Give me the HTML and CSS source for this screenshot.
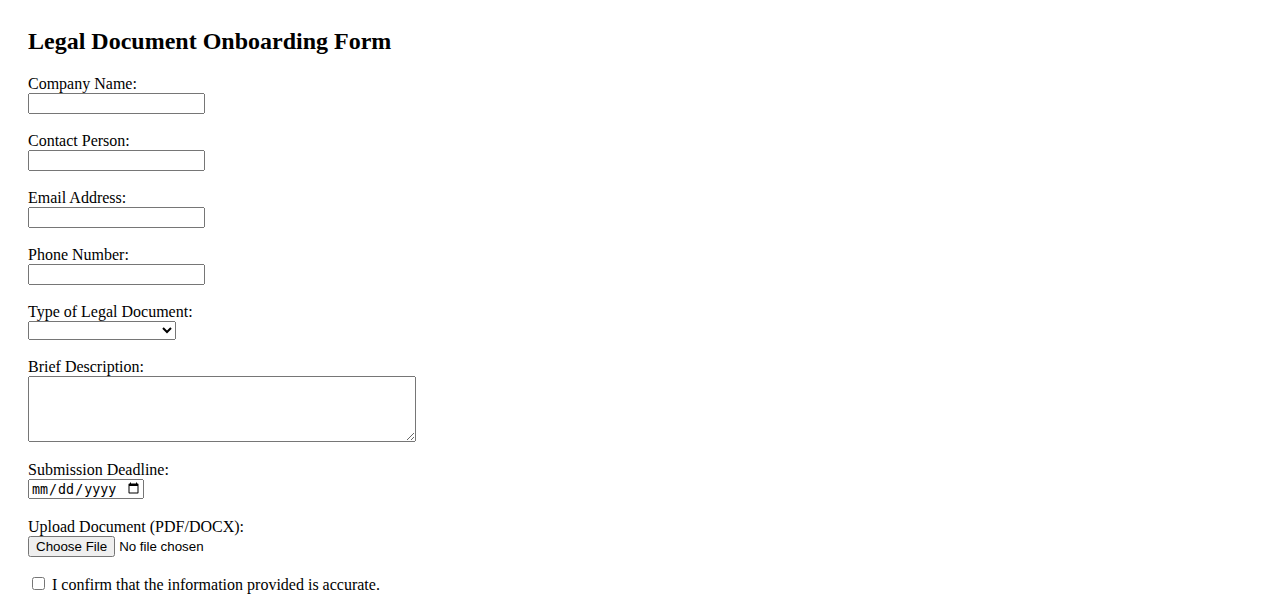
FILE: index.html
```html
<!DOCTYPE html>
<html>
<head>
<meta charset="utf-8">
<title>Legal Document Onboarding Form</title>
<link rel="stylesheet" href="styles.css">
</head>
<body>
<div class="page">
  <h2 class="title">Legal Document Onboarding Form</h2>
  <form class="form">
    <div class="field">
      <label class="label" for="company">Company Name:</label>
      <div><input class="text" type="text" id="company"></div>
    </div>
    <div class="field">
      <label class="label" for="contact">Contact Person:</label>
      <div><input class="text" type="text" id="contact"></div>
    </div>
    <div class="field">
      <label class="label" for="email">Email Address:</label>
      <div><input class="text" type="email" id="email"></div>
    </div>
    <div class="field">
      <label class="label" for="phone">Phone Number:</label>
      <div><input class="text" type="tel" id="phone"></div>
    </div>
    <div class="field">
      <label class="label" for="doctype">Type of Legal Document:</label>
      <div><select class="select" id="doctype"><option></option></select></div>
    </div>
    <div class="field">
      <label class="label" for="desc">Brief Description:</label>
      <div><textarea class="area" id="desc" rows="4" cols="50"></textarea></div>
    </div>
    <div class="field">
      <label class="label" for="deadline">Submission Deadline:</label>
      <div><input class="date" type="date" id="deadline"></div>
    </div>
    <div class="field">
      <label class="label" for="upload">Upload Document (PDF/DOCX):</label>
      <div><input class="file" type="file" id="upload"></div>
    </div>
    <div class="field check">
      <input type="checkbox" id="confirm"> <label for="confirm">I confirm that the information provided is accurate.</label>
    </div>
  </form>
</div>
</body>
</html>
```
FILE: styles.css
```css
body {
  margin: 8px;
  font-family: "Liberation Serif", "Times New Roman", serif;
  font-size: 16px;
  color: #000;
  background: #fff;
}
.page {
  padding: 20px;
}
.title {
  margin: 0 0 20px 0;
  font-size: 24px;
  font-weight: bold;
}
.form {
  display: flex;
  flex-direction: column;
  gap: 18px;
}
.label {
  display: block;
}
.text {
  width: 177px;
  box-sizing: border-box;
}
.select {
  width: 148px;
}
.area {
  display: block;
  width: 388px;
  height: 66px;
  box-sizing: border-box;
  margin-bottom: 1px;
}
.date {
  width: 116px;
  height: 20px;
  box-sizing: border-box;
  margin-bottom: 1px;
}
.check {
  margin-top: -1px;
}
```
